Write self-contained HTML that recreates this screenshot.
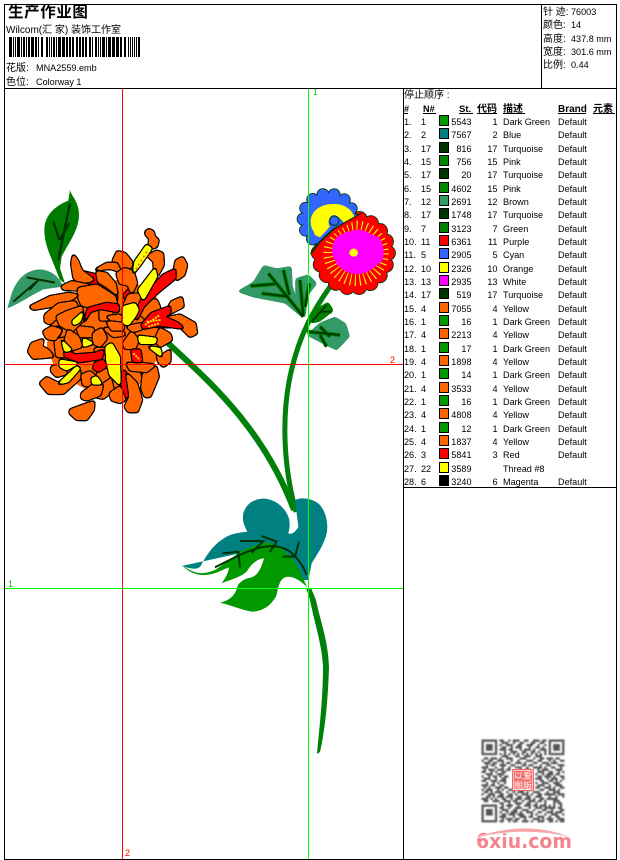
<!DOCTYPE html>
<html><head><meta charset="utf-8"><style>
html,body{margin:0;padding:0;background:#fff;width:620px;height:860px;overflow:hidden}
svg{display:block}
text{font-family:"Liberation Sans","WenQuanYi Zen Hei","Noto Sans CJK SC",sans-serif;font-size:9.1px;fill:#000}
.cj{font-family:"Liberation Sans","WenQuanYi Zen Hei","Noto Sans CJK SC",sans-serif;font-size:10px}
.b{font-weight:bold}
#pet polygon{filter:url(#p)}
.lf{filter:url(#r)}
</style></head><body>
<svg width="620" height="860" viewBox="0 0 620 860" xmlns="http://www.w3.org/2000/svg">
<defs>
<filter id="p" x="-40%" y="-40%" width="180%" height="180%" color-interpolation-filters="sRGB">
<feGaussianBlur in="SourceGraphic" stdDeviation="4" result="b"/>
<feColorMatrix in="b" type="matrix" values="0 0 0 0 0  0 0 0 0 0  0 0 0 0 0  0 0 0 20 -1" result="o"/>
<feColorMatrix in="b" type="matrix" values="1 0 0 0 0  0 1 0 0 0  0 0 1 0 0  0 0 0 20 -6" result="i"/>
<feMerge><feMergeNode in="o"/><feMergeNode in="i"/></feMerge>
</filter>
<filter id="r" x="-20%" y="-20%" width="140%" height="140%" color-interpolation-filters="sRGB">
<feGaussianBlur in="SourceGraphic" stdDeviation="5" result="b"/>
<feColorMatrix in="b" type="matrix" values="1 0 0 0 0  0 1 0 0 0  0 0 1 0 0  0 0 0 20 -9"/>
</filter>
<filter id="q" x="-5%" y="-5%" width="110%" height="110%"><feGaussianBlur stdDeviation=".35"/></filter>
<clipPath id="bc"><polygon points="200,0 440,0 425,100 380,125 340,148 300,185 272,222 200,320"/></clipPath>
</defs>
<rect width="620" height="860" fill="#fff"/>

<!-- stems -->
<g fill="none" stroke="#007f0a">
<path d="M168 343C205 378 262 425 294 510" stroke-width="6"/>
<path d="M332 284C312 312 300 335 292 368C281 412 283 465 296 512" stroke-width="5"/>
</g>
<path d="M306 588L311 588L316 600C320 620 328 640 329 667C328 700 325 730 320 752L317 754C319 730 323 700 323 667C322 645 315 625 310 600Z" fill="#007f0a"/>

<!-- chrysanthemum + left leaves (coords in 3x space) -->
<g transform="translate(0 180) scale(.33333)" stroke-linejoin="round">
<path d="M210 30C215 50 237 65 237 105C237 150 205 190 185 230L180 265L195 310L180 300L165 262C150 225 133 190 133 150C133 110 160 80 205 62Z" fill="#007a00"/>
<path d="M210 70L175 240M160 125L178 180M208 130L178 180" stroke="#003300" stroke-width="7" fill="none"/>
<path d="M22 385L35 340C50 300 75 270 120 268C150 270 175 285 190 320L130 328C95 345 60 370 22 385Z" fill="#339966"/>
<path d="M40 365L110 305M80 292L165 308M88 330L115 300" stroke="#003300" stroke-width="6" fill="none"/>

<polygon points="150,420 230,340 380,290 470,350 480,470 470,540 400,640 280,640 170,580 140,500" fill="#ff6600"/>

<g id="pet">
<g fill="#ff0000">
<polygon points="248,275 290,285 320,305 350,345 350,365 300,330 260,305"/>
<polygon points="165,370 205,345 210,375"/>
<polygon points="155,470 170,440 185,450 170,480"/>
<polygon points="372,345 395,320 398,345 380,365"/>
<polygon points="425,570 445,575 440,605 430,600"/>
<polygon points="370,570 385,590 395,635 370,660 365,610"/>
</g>
<g fill="#ff6600">
<polygon points="165,480 215,470 215,530 170,530"/>
<polygon points="230,440 280,445 280,470 240,470"/>
<polygon points="385,345 430,340 450,370 410,395 370,380"/>
<polygon points="300,380 340,385 330,420 300,420"/>
<polygon points="300,610 330,590 340,630 310,655 285,650"/>
<polygon points="437,155 447,148 460,155 463,170 475,180 470,200 455,205 447,190 450,175 438,165"/>
<polygon points="443,228 470,213 488,220 490,255 472,288 463,270 462,245"/>
<polygon points="528,242 548,232 560,255 552,285 530,300 522,275"/>
<polygon points="340,240 352,215 375,220 395,245 395,262 370,262 355,262 340,250"/>
<polygon points="285,270 320,250 350,250 362,275 330,265"/>
<polygon points="350,280 375,265 400,275 410,310 395,340 385,315 360,310"/>
<polygon points="220,225 232,240 245,272 282,300 240,310 222,295 215,250"/>
<polygon points="185,320 215,305 290,320 240,330 190,328"/>
<polygon points="290,275 320,280 345,310 352,345 320,320 295,305"/>
<polygon points="235,325 290,315 345,350 350,375 285,385 245,375 235,350"/>
<polygon points="90,380 150,350 205,340 235,345 195,370 150,380 100,388"/>
<polygon points="135,405 175,372 225,365 235,385 190,395 150,432 135,425"/>
<polygon points="170,410 200,395 245,380 250,420 215,455 180,435"/>
<polygon points="130,455 155,440 185,450 165,480 140,475"/>
<polygon points="95,490 130,478 125,500 145,510 160,530 100,535 85,515"/>
<polygon points="155,560 190,555 200,580 170,590 155,575"/>
<polygon points="120,610 140,592 175,610 240,570 240,595 190,640 145,640"/>
<polygon points="245,585 270,575 300,600 280,620 250,615"/>
<polygon points="245,640 285,610 308,615 300,645 260,660 245,655"/>
<polygon points="210,690 250,675 282,665 280,690 260,719 230,718 210,700"/>
<polygon points="290,590 300,560 325,570 330,590 300,610"/>
<polygon points="285,505 318,505 320,550 290,550"/>
<polygon points="205,450 235,470 245,500 215,510 195,480"/>
<polygon points="280,460 305,445 320,475 300,500 280,490"/>
<polygon points="330,640 360,620 375,660 360,668 335,660"/>
<polygon points="380,580 410,610 425,660 412,695 385,695 375,680 390,650"/>
<polygon points="430,580 468,560 475,590 450,650 435,650 425,625"/>
<polygon points="380,550 420,550 465,555 440,575 390,570"/>
<polygon points="470,505 480,530 510,510 510,545 490,560 475,545"/>
<polygon points="480,445 510,462 515,480 480,500 465,480"/>
<polygon points="370,490 395,455 415,480 405,505 375,505"/>
<polygon points="310,445 360,445 375,465 340,470"/>
<polygon points="320,410 360,405 372,425 350,430"/>
<polygon points="320,425 370,430 370,450 335,450"/>
<polygon points="380,440 425,430 430,445 400,455"/>
<polygon points="430,360 470,360 480,385 440,420 420,400"/>
<polygon points="515,365 545,352 550,380 510,400 490,410"/>
<polygon points="425,435 490,415 540,405 585,430 590,460 570,470 540,440 480,440"/>
</g>
<g fill="#ff0000">
<polygon points="250,430 265,385 320,370 355,375 355,395 300,385 270,395"/>
<polygon points="195,510 225,525 285,520 310,510 305,535 240,545 195,530"/>
<polygon points="285,550 310,540 318,560 295,575 280,565"/>
<polygon points="395,510 420,510 425,545 400,545"/>
<polygon points="525,268 525,295 470,340 430,380 410,420 405,400 430,350 490,285"/>
<polygon points="425,435 455,400 510,380 510,400 490,410 535,430 550,445 480,435 430,445"/>
</g>
<g fill="#ffff00">
<polygon points="415,330 465,265 470,290 430,360"/>
<polygon points="370,380 405,370 415,390 405,410 385,435 370,430"/>
<polygon points="318,500 335,490 358,530 360,615 330,585 320,540"/>
<polygon points="415,468 470,475 465,490 420,490"/>
<polygon points="445,500 480,505 485,530"/>
<polygon points="175,612 230,560 240,565 205,605"/>
<polygon points="180,540 235,550 200,570 180,560"/>
<polygon points="185,480 215,510 195,515"/>
<polygon points="250,475 280,490 250,500"/>
<polygon points="217,425 250,395 240,425 222,435"/>
<polygon points="275,595 290,590 305,612 278,612"/>
<polygon points="400,280 405,245 440,195 455,205 420,255"/>
</g>
</g>
<path d="M435 435L480 405M440 425L482 420M445 440L478 430M400 520L420 540" stroke="#ffff00" stroke-width="5" fill="none" stroke-dasharray="6 3"/>
<path d="M408 268L445 208" stroke="#ff6600" stroke-width="5" fill="none" stroke-dasharray="6 8"/>
</g>

<!-- right flowers (coords in 3x space) -->
<g transform="translate(220 180) scale(.33333)">
<polygon class="lf" points="50,335 100,305 130,255 170,265 215,258 218,320 255,420 195,370 100,352" fill="#339966"/>
<polygon class="lf" points="226,295 265,283 292,310 265,345 255,420 226,340" fill="#339966"/>
<polygon class="lf" points="258,465 300,428 345,410 378,430 390,470 350,512 310,492" fill="#339966"/>
<polygon class="lf" points="268,432 290,385 325,365 342,392 300,425" fill="#008000"/>
<path d="M92 318L165 312M145 280L250 410M190 270L208 345M125 340L205 350M240 300L250 410M268 310L255 380M262 455L360 465M300 440L330 470M320 500L300 465M275 425L320 375M300 395L335 395" stroke="#008000" stroke-width="12" fill="none"/>
<path d="M92 318L165 312M145 280L250 410M190 270L208 345M125 340L205 350M240 300L250 410M268 310L255 380M262 455L360 465M300 440L330 470M320 500L300 465M275 425L320 375M300 395L335 395" stroke="#003300" stroke-width="5" fill="none"/>
<circle cx="400" cy="219" r="104" fill="#003300" stroke="#003300" stroke-width="47" stroke-linecap="round" stroke-dasharray=".5 35.8"/>
<circle cx="400" cy="219" r="104" fill="#ff0000" stroke="#ff0000" stroke-width="42" stroke-linecap="round" stroke-dasharray=".5 35.8"/>
<circle cx="408" cy="220" r="80" fill="none" stroke="#ffff00" stroke-width="36" stroke-dasharray="3 11"/>
<path d="M412 148C440 150 450 165 475 170C490 190 495 215 488 240C460 265 440 285 405 282C385 280 365 270 350 250C332 225 332 195 352 170C375 155 390 155 412 148Z" fill="#ff00ff"/>
<ellipse cx="401" cy="218" rx="13" ry="12" fill="#ffff00"/>
<g clip-path="url(#bc)">
<circle cx="325" cy="118" r="76" fill="#003300" stroke="#003300" stroke-width="38" stroke-linecap="round" stroke-dasharray=".5 33.6"/>
<circle cx="325" cy="118" r="76" fill="#3366ff" stroke="#3366ff" stroke-width="33" stroke-linecap="round" stroke-dasharray=".5 33.6"/>
<path d="M272 125C272 95 300 70 345 72C385 72 410 105 408 135L385 145C372 130 365 115 345 105C325 105 322 130 330 140L300 172L285 165C280 150 272 145 272 125Z" fill="#ffff00"/>
<circle cx="343" cy="122" r="14" fill="#3366ff" stroke="#003300" stroke-width="3"/>
</g>
<path d="M425 100L380 125L340 148L300 185L272 222" fill="none" stroke="#003300" stroke-width="5" stroke-linejoin="round"/>
<path d="M425 106L380 131L345 152L305 190L278 226" fill="none" stroke="#ff0000" stroke-width="8" stroke-linejoin="round"/>
</g>

<!-- lower leaf (coords in 3x space) -->
<g transform="translate(170 480) scale(.33333)">
<path d="M35 258C60 265 80 272 92 258C105 235 125 195 170 170C195 158 215 158 232 155C225 140 215 125 220 100C228 70 255 55 285 56C320 60 345 85 355 110C362 130 358 150 355 160C365 165 378 155 385 140L375 60C395 50 430 55 450 75C470 100 475 135 470 160C462 195 440 225 425 250L415 300L400 300L300 200Z" fill="#008080"/>
<path d="M38 258C70 275 85 290 135 270L175 243L210 215C240 200 270 190 300 188C340 205 370 235 385 265L412 322C390 300 365 285 345 292C325 300 325 330 318 350C300 380 275 395 245 395C215 390 180 375 150 368C175 362 195 350 202 320C208 305 225 295 245 292C265 285 275 260 282 235C265 235 245 250 230 275C215 290 180 300 155 310C165 295 175 280 177 262C160 268 140 280 120 283C90 290 60 280 38 258Z" fill="#009900"/>
<path d="M135 262C210 225 300 170 360 215C385 235 400 260 410 285M158 220L205 215L210 262M210 183L280 183L245 218M275 168L320 185L300 215M338 230L375 230L387 185" stroke="#003300" stroke-width="6" fill="none"/>
</g>

<!-- guide lines -->
<g shape-rendering="crispEdges" stroke-width="1">
<path d="M122.5 88V859M4 364.5H403" stroke="#ff0000"/>
<path d="M308.5 88V859M4 588.5H403" stroke="#00ff00"/>
</g>
<text x="313" y="95" style="fill:#00c000;font-size:8px">1</text>
<text x="390" y="363" style="fill:#ff0000;font-size:9px">2</text>
<text x="8" y="587" style="fill:#00c000;font-size:9px">1</text>
<text x="125" y="856" style="fill:#ff0000;font-size:9px">2</text>

<!-- frame -->
<g shape-rendering="crispEdges" stroke="#000" stroke-width="1" fill="none">
<rect x="4.5" y="4.5" width="612" height="855"/>
<path d="M4 88.5H617M541.5 4V88M403.5 88V860M403 487.5H617"/>
</g>

<!-- header -->
<text x="8" y="17" class="b" style="font-size:15.5px;letter-spacing:.6px">生产作业图</text>
<text x="6" y="33" class="cj">Wilcom(汇 家) 装饰工作室</text>
<g fill="#000" shape-rendering="crispEdges">
<path d="M9 37h3v20h-3zM13 37h1v20h-1zM15 37h1v20h-1zM17 37h3v20h-3zM21 37h1v20h-1zM23 37h2v20h-2zM26 37h1v20h-1zM28 37h2v20h-2zM31 37h3v20h-3zM35 37h2v20h-2zM38 37h1v20h-1zM41 37h2v20h-2zM46 37h2v20h-2zM49 37h1v20h-1zM51 37h1v20h-1zM53 37h2v20h-2zM56 37h1v20h-1zM58 37h3v20h-3zM62 37h3v20h-3zM66 37h2v20h-2zM69 37h2v20h-2zM72 37h2v20h-2zM76 37h2v20h-2zM79 37h2v20h-2zM82 37h2v20h-2zM85 37h2v20h-2zM89 37h2v20h-2zM92 37h1v20h-1zM95 37h2v20h-2zM98 37h1v20h-1zM100 37h1v20h-1zM102 37h3v20h-3zM106 37h1v20h-1zM108 37h3v20h-3zM112 37h3v20h-3zM116 37h3v20h-3zM120 37h2v20h-2zM124 37h2v20h-2zM128 37h1v20h-1zM130 37h1v20h-1zM132 37h1v20h-1zM134 37h1v20h-1zM136 37h1v20h-1zM138 37h2v20h-2z"/>
</g>
<text x="6" y="71" class="cj">花版:</text><text x="36" y="71">MNA2559.emb</text>
<text x="6" y="85" class="cj">色位:</text><text x="36" y="85">Colorway 1</text>
<text x="543" y="15" class="cj">针 迹:</text><text x="571" y="15">76003</text>
<text x="543" y="28" class="cj">颜色:</text><text x="571" y="28">14</text>
<text x="543" y="42" class="cj">高度:</text><text x="571" y="42">437.8 mm</text>
<text x="543" y="55" class="cj">宽度:</text><text x="571" y="55">301.6 mm</text>
<text x="543" y="68" class="cj">比例:</text><text x="571" y="68">0.44</text>

<!-- table header -->
<text x="404" y="98" class="cj">停止顺序 :</text>
<g class="b">
<text x="404" y="112" class="b">#</text>
<text x="423" y="112" class="b">N#</text>
<text x="459" y="112" class="b" style="font-size:9.5px">St.</text>
<text x="477" y="112" class="b cj">代码</text>
<text x="503" y="112" class="b cj">描述</text>
<text x="558" y="112" class="b" style="font-size:10px">Brand</text>
<text x="593" y="112" class="b cj">元素</text>
</g>
<path d="M404 113.5h4M423 113.5h13M459 113.5h14M477 113.5h20M503 113.5h22M558 113.5h28M593 113.5h22" stroke="#000" shape-rendering="crispEdges"/>

<!-- rows -->
<g stroke="#000" shape-rendering="crispEdges">
<rect x="439.5" y="115.5" width="9" height="10" fill="#009900"/>
<rect x="439.5" y="128.5" width="9" height="10" fill="#008080"/>
<rect x="439.5" y="142.5" width="9" height="10" fill="#003300"/>
<rect x="439.5" y="155.5" width="9" height="10" fill="#008800"/>
<rect x="439.5" y="168.5" width="9" height="10" fill="#003300"/>
<rect x="439.5" y="182.5" width="9" height="10" fill="#008800"/>
<rect x="439.5" y="195.5" width="9" height="10" fill="#339966"/>
<rect x="439.5" y="208.5" width="9" height="10" fill="#003300"/>
<rect x="439.5" y="222.5" width="9" height="10" fill="#008000"/>
<rect x="439.5" y="235.5" width="9" height="10" fill="#ff0000"/>
<rect x="439.5" y="248.5" width="9" height="10" fill="#3366ff"/>
<rect x="439.5" y="262.5" width="9" height="10" fill="#ffff00"/>
<rect x="439.5" y="275.5" width="9" height="10" fill="#ff00ff"/>
<rect x="439.5" y="288.5" width="9" height="10" fill="#003300"/>
<rect x="439.5" y="302.5" width="9" height="10" fill="#ff6600"/>
<rect x="439.5" y="315.5" width="9" height="10" fill="#009900"/>
<rect x="439.5" y="328.5" width="9" height="10" fill="#ff6600"/>
<rect x="439.5" y="342.5" width="9" height="10" fill="#009900"/>
<rect x="439.5" y="355.5" width="9" height="10" fill="#ff6600"/>
<rect x="439.5" y="368.5" width="9" height="10" fill="#009900"/>
<rect x="439.5" y="382.5" width="9" height="10" fill="#ff6600"/>
<rect x="439.5" y="395.5" width="9" height="10" fill="#009900"/>
<rect x="439.5" y="408.5" width="9" height="10" fill="#ff6600"/>
<rect x="439.5" y="422.5" width="9" height="10" fill="#009900"/>
<rect x="439.5" y="435.5" width="9" height="10" fill="#ff6600"/>
<rect x="439.5" y="448.5" width="9" height="10" fill="#ff0000"/>
<rect x="439.5" y="462.5" width="9" height="10" fill="#ffff00"/>
<rect x="439.5" y="475.5" width="9" height="10" fill="#000000"/>
</g>
<!-- col # -->
<g>
<text x="404" y="125">1.</text><text x="404" y="138">2.</text><text x="404" y="152">3.</text><text x="404" y="165">4.</text><text x="404" y="178">5.</text><text x="404" y="192">6.</text><text x="404" y="205">7.</text><text x="404" y="218">8.</text><text x="404" y="232">9.</text><text x="404" y="245">10.</text><text x="404" y="258">11.</text><text x="404" y="272">12.</text><text x="404" y="285">13.</text><text x="404" y="298">14.</text><text x="404" y="312">15.</text><text x="404" y="325">16.</text><text x="404" y="338">17.</text><text x="404" y="352">18.</text><text x="404" y="365">19.</text><text x="404" y="378">20.</text><text x="404" y="392">21.</text><text x="404" y="405">22.</text><text x="404" y="418">23.</text><text x="404" y="432">24.</text><text x="404" y="445">25.</text><text x="404" y="458">26.</text><text x="404" y="472">27.</text><text x="404" y="485">28.</text>
</g>
<g>
<text x="421" y="125">1</text><text x="421" y="138">2</text><text x="421" y="152">17</text><text x="421" y="165">15</text><text x="421" y="178">17</text><text x="421" y="192">15</text><text x="421" y="205">12</text><text x="421" y="218">17</text><text x="421" y="232">7</text><text x="421" y="245">11</text><text x="421" y="258">5</text><text x="421" y="272">10</text><text x="421" y="285">13</text><text x="421" y="298">17</text><text x="421" y="312">4</text><text x="421" y="325">1</text><text x="421" y="338">4</text><text x="421" y="352">1</text><text x="421" y="365">4</text><text x="421" y="378">1</text><text x="421" y="392">4</text><text x="421" y="405">1</text><text x="421" y="418">4</text><text x="421" y="432">1</text><text x="421" y="445">4</text><text x="421" y="458">3</text><text x="421" y="472">22</text><text x="421" y="485">6</text>
</g>
<g text-anchor="end">
<text x="471.5" y="125">5543</text><text x="471.5" y="138">7567</text><text x="471.5" y="152">816</text><text x="471.5" y="165">756</text><text x="471.5" y="178">20</text><text x="471.5" y="192">4602</text><text x="471.5" y="205">2691</text><text x="471.5" y="218">1748</text><text x="471.5" y="232">3123</text><text x="471.5" y="245">6361</text><text x="471.5" y="258">2905</text><text x="471.5" y="272">2326</text><text x="471.5" y="285">2935</text><text x="471.5" y="298">519</text><text x="471.5" y="312">7055</text><text x="471.5" y="325">16</text><text x="471.5" y="338">2213</text><text x="471.5" y="352">17</text><text x="471.5" y="365">1898</text><text x="471.5" y="378">14</text><text x="471.5" y="392">3533</text><text x="471.5" y="405">16</text><text x="471.5" y="418">4808</text><text x="471.5" y="432">12</text><text x="471.5" y="445">1837</text><text x="471.5" y="458">5841</text><text x="471.5" y="472">3589</text><text x="471.5" y="485">3240</text>
</g>
<g text-anchor="end">
<text x="497.5" y="125">1</text><text x="497.5" y="138">2</text><text x="497.5" y="152">17</text><text x="497.5" y="165">15</text><text x="497.5" y="178">17</text><text x="497.5" y="192">15</text><text x="497.5" y="205">12</text><text x="497.5" y="218">17</text><text x="497.5" y="232">7</text><text x="497.5" y="245">11</text><text x="497.5" y="258">5</text><text x="497.5" y="272">10</text><text x="497.5" y="285">13</text><text x="497.5" y="298">17</text><text x="497.5" y="312">4</text><text x="497.5" y="325">1</text><text x="497.5" y="338">4</text><text x="497.5" y="352">1</text><text x="497.5" y="365">4</text><text x="497.5" y="378">1</text><text x="497.5" y="392">4</text><text x="497.5" y="405">1</text><text x="497.5" y="418">4</text><text x="497.5" y="432">1</text><text x="497.5" y="445">4</text><text x="497.5" y="458">3</text><text x="497.5" y="485">6</text>
</g>
<g>
<text x="503" y="125">Dark Green</text><text x="503" y="138">Blue</text><text x="503" y="152">Turquoise</text><text x="503" y="165">Pink</text><text x="503" y="178">Turquoise</text><text x="503" y="192">Pink</text><text x="503" y="205">Brown</text><text x="503" y="218">Turquoise</text><text x="503" y="232">Green</text><text x="503" y="245">Purple</text><text x="503" y="258">Cyan</text><text x="503" y="272">Orange</text><text x="503" y="285">White</text><text x="503" y="298">Turquoise</text><text x="503" y="312">Yellow</text><text x="503" y="325">Dark Green</text><text x="503" y="338">Yellow</text><text x="503" y="352">Dark Green</text><text x="503" y="365">Yellow</text><text x="503" y="378">Dark Green</text><text x="503" y="392">Yellow</text><text x="503" y="405">Dark Green</text><text x="503" y="418">Yellow</text><text x="503" y="432">Dark Green</text><text x="503" y="445">Yellow</text><text x="503" y="458">Red</text><text x="503" y="472">Thread #8</text><text x="503" y="485">Magenta</text>
</g>
<g>
<text x="558" y="125">Default</text><text x="558" y="138">Default</text><text x="558" y="152">Default</text><text x="558" y="165">Default</text><text x="558" y="178">Default</text><text x="558" y="192">Default</text><text x="558" y="205">Default</text><text x="558" y="218">Default</text><text x="558" y="232">Default</text><text x="558" y="245">Default</text><text x="558" y="258">Default</text><text x="558" y="272">Default</text><text x="558" y="285">Default</text><text x="558" y="298">Default</text><text x="558" y="312">Default</text><text x="558" y="325">Default</text><text x="558" y="338">Default</text><text x="558" y="352">Default</text><text x="558" y="365">Default</text><text x="558" y="378">Default</text><text x="558" y="392">Default</text><text x="558" y="405">Default</text><text x="558" y="418">Default</text><text x="558" y="432">Default</text><text x="558" y="445">Default</text><text x="558" y="458">Default</text><text x="558" y="485">Default</text>
</g>

<!-- QR -->
<g transform="translate(481.5 739.5) scale(2.24)" filter="url(#q)">
<path fill="none" stroke="#555" stroke-width="1" d="
M0 .5h7M8 .5h2M12 .5h1M14 .5h3M19 .5h2M23 .5h3M27 .5h2M30 .5h7
M0 1.5h1M6 1.5h1M9 1.5h3M14 1.5h1M17 1.5h2M22 1.5h2M26 1.5h2M30 1.5h1M36 1.5h1
M0 2.5h1M2 2.5h3M6 2.5h1M8 2.5h1M11 2.5h3M16 2.5h2M20 2.5h3M25 2.5h1M28 2.5h1M30 2.5h1M32 2.5h3M36 2.5h1
M0 3.5h1M2 3.5h3M6 3.5h1M9 3.5h2M13 3.5h1M15 3.5h3M21 3.5h1M24 3.5h2M27 3.5h1M30 3.5h1M32 3.5h3M36 3.5h1
M0 4.5h1M2 4.5h3M6 4.5h1M8 4.5h3M12 4.5h2M17 4.5h1M19 4.5h3M23 4.5h1M26 4.5h3M30 4.5h1M32 4.5h3M36 4.5h1
M0 5.5h1M6 5.5h1M10 5.5h1M13 5.5h3M18 5.5h2M22 5.5h2M25 5.5h1M28 5.5h1M30 5.5h1M36 5.5h1
M0 6.5h7M8 6.5h1M10 6.5h1M12 6.5h1M14 6.5h1M16 6.5h1M18 6.5h1M20 6.5h1M22 6.5h1M24 6.5h1M26 6.5h1M28 6.5h1M30 6.5h7
M9 7.5h3M15 7.5h2M19 7.5h3M24 7.5h3
M1 8.5h2M4 8.5h3M8 8.5h1M11 8.5h3M17 8.5h3M23 8.5h1M26 8.5h2M29 8.5h3M33 8.5h2
M0 9.5h1M3 9.5h2M7 9.5h3M13 9.5h1M16 9.5h1M20 9.5h3M25 9.5h2M30 9.5h1M32 9.5h1M35 9.5h2
M1 10.5h3M5 10.5h2M9 10.5h1M11 10.5h2M15 10.5h3M19 10.5h1M23 10.5h2M27 10.5h3M31 10.5h3
M2 11.5h1M4 11.5h2M8 11.5h3M13 11.5h2M18 11.5h2M21 11.5h2M26 11.5h1M29 11.5h2M34 11.5h3
M0 12.5h3M6 12.5h1M9 12.5h1M12 12.5h1M15 12.5h3M20 12.5h1M23 12.5h4M28 12.5h1M31 12.5h2M35 12.5h1
M1 13.5h1M3 13.5h3M7 13.5h3M11 13.5h2M17 13.5h1M19 13.5h3M25 13.5h1M27 13.5h3M33 13.5h3
M0 14.5h2M4 14.5h1M6 14.5h1M9 14.5h2M25 14.5h3M30 14.5h2M34 14.5h1M36 14.5h1
M2 15.5h3M7 15.5h3M24 15.5h1M27 15.5h1M29 15.5h3M33 15.5h2
M0 16.5h1M3 16.5h1M5 16.5h2M8 16.5h1M10 16.5h2M25 16.5h2M28 16.5h3M32 16.5h1M35 16.5h2
M1 17.5h3M6 17.5h1M9 17.5h2M24 17.5h3M29 17.5h1M31 17.5h3M36 17.5h1
M0 18.5h2M4 18.5h3M8 18.5h3M26 18.5h2M30 18.5h2M33 18.5h1M35 18.5h1
M2 19.5h1M5 19.5h1M7 19.5h1M10 19.5h1M24 19.5h1M27 19.5h3M32 19.5h3
M0 20.5h3M4 20.5h2M8 20.5h2M25 20.5h3M30 20.5h1M33 20.5h3
M1 21.5h1M3 21.5h1M6 21.5h3M10 21.5h2M24 21.5h2M28 21.5h3M32 21.5h1M35 21.5h2
M0 22.5h1M2 22.5h3M7 22.5h1M9 22.5h1M12 22.5h3M17 22.5h2M21 22.5h2M26 22.5h2M30 22.5h3M34 22.5h1
M1 23.5h2M4 23.5h1M6 23.5h3M11 23.5h1M14 23.5h1M16 23.5h3M20 23.5h1M23 23.5h3M29 23.5h1M32 23.5h3
M0 24.5h1M3 24.5h3M8 24.5h2M12 24.5h2M15 24.5h1M18 24.5h3M22 24.5h1M25 24.5h2M28 24.5h5M34 24.5h3
M2 25.5h2M5 25.5h1M7 25.5h3M11 25.5h3M16 25.5h2M20 25.5h2M24 25.5h3M30 25.5h1M33 25.5h1M36 25.5h1
M0 26.5h3M4 26.5h1M6 26.5h1M9 26.5h2M13 26.5h1M15 26.5h3M19 26.5h3M23 26.5h1M26 26.5h2M29 26.5h5
M1 27.5h2M5 27.5h3M10 27.5h3M14 27.5h2M18 27.5h1M21 27.5h3M25 27.5h2M28 27.5h1M32 27.5h3
M8 28.5h2M12 28.5h1M15 28.5h3M20 28.5h2M24 28.5h1M28 28.5h1M32 28.5h1M34 28.5h2
M0 29.5h7M9 29.5h1M11 29.5h3M16 29.5h1M19 29.5h3M23 29.5h2M26 29.5h3M30 29.5h1M32 29.5h1M35 29.5h1
M0 30.5h1M6 30.5h1M8 30.5h2M12 30.5h1M15 30.5h3M21 30.5h1M24 30.5h3M28 30.5h5M34 30.5h2
M0 31.5h1M2 31.5h3M6 31.5h1M9 31.5h3M14 31.5h2M18 31.5h3M23 31.5h1M27 31.5h2M31 31.5h1M35 31.5h2
M0 32.5h1M2 32.5h3M6 32.5h1M8 32.5h1M11 32.5h1M13 32.5h3M17 32.5h1M20 32.5h3M25 32.5h2M29 32.5h3M33 32.5h3
M0 33.5h1M2 33.5h3M6 33.5h1M9 33.5h2M12 33.5h3M16 33.5h3M22 33.5h1M24 33.5h1M28 33.5h1M31 33.5h3M36 33.5h1
M0 34.5h1M6 34.5h1M8 34.5h3M14 34.5h1M17 34.5h3M21 34.5h2M25 34.5h3M30 34.5h1M33 34.5h2
M0 35.5h1M6 35.5h1M9 35.5h1M11 35.5h3M15 35.5h2M19 35.5h1M23 35.5h3M27 35.5h1M29 35.5h3M34 35.5h3
M0 36.5h7M8 36.5h2M12 36.5h1M14 36.5h2M18 36.5h3M22 36.5h1M25 36.5h3M30 36.5h2M33 36.5h1M35 36.5h2"/>
</g>
<rect x="512" y="769" width="22" height="22" fill="#f46a6a"/>
<rect x="513.5" y="770.5" width="19" height="19" fill="none" stroke="#fff" stroke-width=".6"/>
<text x="514" y="779" style="fill:#fff;font-size:9px">以</text>
<text x="523" y="779" style="fill:#fff;font-size:9px">爱</text>
<text x="514" y="789" style="fill:#fff;font-size:9px">图</text>
<text x="523" y="789" style="fill:#fff;font-size:9px">版</text>

<!-- 6xiu logo -->
<text x="476" y="848" textLength="96" lengthAdjust="spacingAndGlyphs" style="font-family:'DejaVu Sans',sans-serif;font-weight:bold;font-size:20px;fill:#f4858c">6xiu.com</text>
<path d="M477 838C500 826 545 824 571 838C545 830 505 830 477 838Z" fill="#f6a5a8" stroke="#fff" stroke-width=".5"/>
</svg>
</body></html>
